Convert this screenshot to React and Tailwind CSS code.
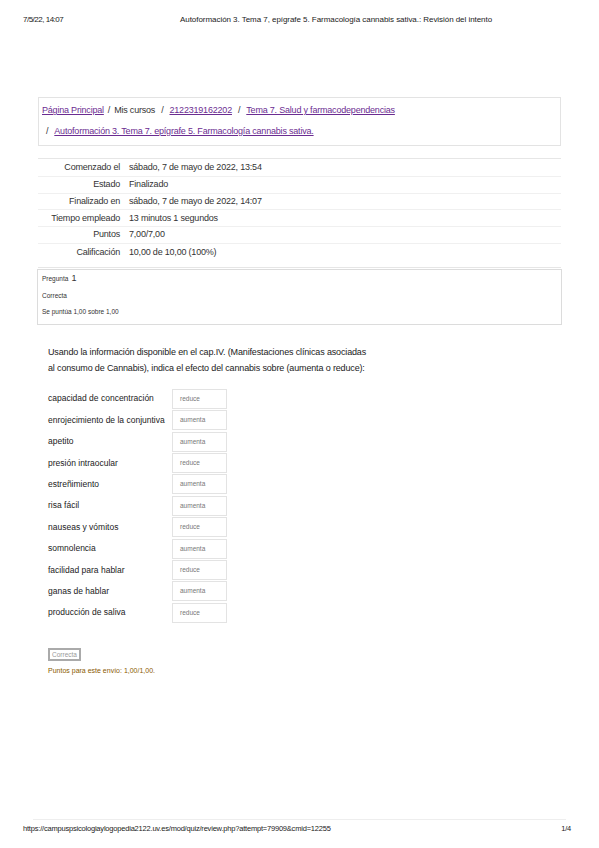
import React from 'react';

const rows = [
  ['Comenzado el', 'sábado, 7 de mayo de 2022, 13:54'],
  ['Estado', 'Finalizado'],
  ['Finalizado en', 'sábado, 7 de mayo de 2022, 14:07'],
  ['Tiempo empleado', '13 minutos 1 segundos'],
  ['Puntos', '7,00/7,00'],
  ['Calificación', '10,00 de 10,00 (100%)'],
];

const matches = [
  ['capacidad de concentración', 'reduce'],
  ['enrojecimiento de la conjuntiva', 'aumenta'],
  ['apetito', 'aumenta'],
  ['presión intraocular', 'reduce'],
  ['estreñimiento', 'aumenta'],
  ['risa fácil', 'aumenta'],
  ['nauseas y vómitos', 'reduce'],
  ['somnolencia', 'aumenta'],
  ['facilidad para hablar', 'reduce'],
  ['ganas de hablar', 'aumenta'],
  ['producción de saliva', 'reduce'],
];

const link = 'text-[#6b2c91] underline';

export default function App() {
  return (
    <div className="w-[599px] h-[848px] bg-white text-[#333] relative flex flex-col" style={{ fontFamily: '"Liberation Sans", Arial, sans-serif' }}>
      <div className="flex items-center h-[39px] pl-[23px] text-[8px] text-[#222]">
        <span className="w-[157px] tracking-[-0.5px]">7/5/22, 14:07</span>
        <span className="tracking-[-0.05px]">Autoformación 3. Tema 7, epígrafe 5. Farmacología cannabis sativa.: Revisión del intento</span>
      </div>

      <div className="mt-[58px] mx-[38px] border border-[#e3e3e3] px-[3px] pt-[2px] pb-[3px] text-[9px] leading-[21px] tracking-[-0.2px]">
        <div>
          <a className={link}>Página Principal</a>
          <span className="mx-[4px]">/</span>Mis cursos<span className="mx-[6px]">/</span>
          <a className={link}>2122319162202</a>
          <span className="mx-[6px]">/</span>
          <a className={link}>Tema 7. Salud y farmacodependencias</a>
        </div>
        <div className="pl-[4px]">
          <span className="mr-[6px]">/</span>
          <a className={link}>Autoformación 3. Tema 7. epígrafe 5. Farmacología cannabis sativa.</a>
        </div>
      </div>

      <div className="mt-[12px] mx-[38px] border-t border-b border-[#e6e6e6] pt-[1px] pb-[6px] text-[9px] tracking-[-0.2px]">
        {rows.map(([k, v], i) => (
          <div key={k} className={`flex h-[16.8px] items-center ${i < rows.length - 1 ? 'border-b border-[#f0f0f0]' : ''}`}>
            <div className="w-[91px] text-right pr-[9px]">{k}</div>
            <div>{v}</div>
          </div>
        ))}
      </div>

      <div className="mt-[1px] mx-[37px] border border-[#dcdcdc] pl-[4px] pt-[4px] pb-[4px] text-[6.5px] text-[#333] leading-none">
        <div className="flex items-baseline gap-[3px] h-[14px]">
          <span>Pregunta</span><span className="text-[9px]">1</span>
        </div>
        <div className="h-[16px] flex items-center">Correcta</div>
        <div className="h-[16px] flex items-center">Se puntúa 1,00 sobre 1,00</div>
      </div>

      <div className="mt-[19px] ml-[48px] text-[9px] leading-[16px] text-[#222] tracking-[-0.15px]">
        <div>Usando la información disponible en el cap.IV. (Manifestaciones clínicas asociadas</div>
        <div>al consumo de Cannabis), indica el efecto del cannabis sobre (aumenta o reduce):</div>
      </div>

      <div className="mt-[13px] ml-[48px] flex flex-col gap-[1.4px]">
        {matches.map(([k, v]) => (
          <div key={k} className="flex items-center h-[20px]">
            <div className="w-[124px] text-[8.5px] text-[#222] tracking-[0px]">{k}</div>
            <div className="w-[55px] h-[20px] border border-[#e3e3e3] flex items-center pl-[7px] text-[6.5px] text-[#777]">{v}</div>
          </div>
        ))}
      </div>

      <div className="mt-[17px] ml-[48px]">
        <div className="inline-block border-2 border-[#aaa] px-[2px] text-[6.5px] text-[#999] leading-[9px]">Correcta</div>
        <div className="mt-[2px] text-[7px] text-[#8a5a00]">Puntos para este envío: 1,00/1,00.</div>
      </div>

      <div className="absolute left-0 right-0 top-[819px]">
        <div className="mx-[33px] border-t border-[#eee]"></div>
        <div className="flex justify-between pl-[23px] pr-[28px] pt-[3px] text-[7.5px] text-[#222] tracking-[-0.2px]">
          <span>https://campuspsicologiaylogopedia2122.uv.es/mod/quiz/review.php?attempt=79909&cmid=12255</span>
          <span>1/4</span>
        </div>
      </div>
    </div>
  );
}
